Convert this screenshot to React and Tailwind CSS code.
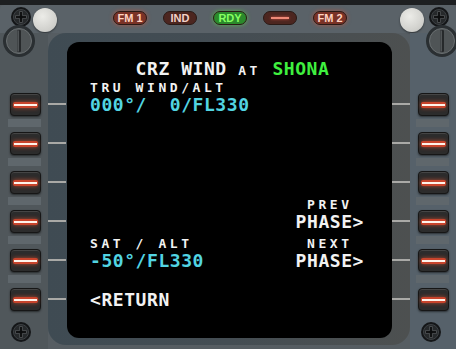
const L = "font-bold text-[18px] tracking-[0.56px]";
const S = "font-bold text-[13px] tracking-[3.57px]";
const W = "text-[#f2f2f2]";
const C = "text-[#52d4e2]";
const G = "text-[#3ff03f]";

function SmallScrew() {
  return (
    <svg width="20" height="20" viewBox="0 0 20 20">
      <circle cx="10" cy="10" r="10" fill="#141618" />
      <circle cx="10" cy="10" r="7.5" fill="#26292b" stroke="#3d4144" strokeWidth="1" />
      <path d="M8.6 4.5h2.8v4.1h4.1v2.8h-4.1v4.1H8.6v-4.1H4.5V8.6h4.1z" fill="#0c0d0e" stroke="#55595c" strokeWidth="0.8" />
    </svg>
  );
}

function BigScrew() {
  return (
    <svg width="32" height="32" viewBox="0 0 32 32">
      <circle cx="16" cy="16" r="16" fill="#2a2f32" />
      <circle cx="16" cy="16" r="12.5" fill="#4f5456" stroke="#6a6f71" strokeWidth="1" />
      <rect x="14" y="5" width="4" height="22" rx="1" fill="#26292b" />
      <rect x="14.6" y="5.5" width="1" height="21" fill="#6d7173" />
    </svg>
  );
}

function Knob() {
  return <div className="h-[24px] w-[24px] rounded-full bg-[radial-gradient(circle_at_40%_35%,#ecece8,#cfcfcb_70%,#a9a9a5)] shadow-[0_1px_2px_rgba(0,0,0,0.5)]" />;
}

function Pill({ children, tone = "red" }) {
  const styles = {
    red: "bg-[#7a3226] text-[#ffd3c2] shadow-[0_0_4px_rgba(230,80,50,0.55)]",
    dim: "bg-[#4c2620] text-[#f3d2c8]",
    green: "bg-[#2b8a2b] text-[#86ff62] shadow-[0_0_4px_rgba(80,230,60,0.6)]"
  };
  return (
    <div className={`flex h-[14px] w-[34px] items-center justify-center rounded-full border border-[#2a1a16] font-['Liberation_Sans',sans-serif] text-[11px] font-bold leading-none ${styles[tone]}`}>
      {children}
    </div>
  );
}

function Lsk({ plate = true }) {
  return (
    <div className="mb-[5px] flex flex-col">
      <div className="flex h-[23px] w-[31px] items-center justify-center rounded-[4px] border border-[#161616] bg-[#2c2c2c] shadow-[inset_0_1px_0_rgba(255,255,255,0.12),0_1px_2px_rgba(0,0,0,0.5)]">
        <div className="flex h-[6px] w-[25px] items-center justify-center rounded-[2px] bg-[#c8442c] shadow-[0_0_4px_rgba(255,90,50,0.6)]">
          <div className="h-[2px] w-[23px] bg-[#fff3ea]" />
        </div>
      </div>
      {plate ? <div className="-ml-[2px] mt-[3px] h-[8px] w-[33px] bg-[#5f676c]" /> : null}
    </div>
  );
}

function KeyColumn({ side }) {
  const left = side === "left";
  return (
    <div className={`flex flex-col ${left ? "w-[48px] bg-[#50575b] pl-[10px]" : "w-[46px] bg-[#56616a] pl-[8px]"}`}>
      <div className={`-mt-[8px] mb-[36px] ${left ? "-ml-[7px]" : "ml-[8px]"}`}>
        <BigScrew />
      </div>
      {[0, 1, 2, 3, 4].map((i) => (
        <Lsk key={i} />
      ))}
      <Lsk plate={false} />
      <div className={`mt-[6px] ${left ? "ml-[1px]" : "ml-[3px]"}`}>
        <SmallScrew />
      </div>
    </div>
  );
}

function Dashes() {
  return (
    <div className="flex flex-col pt-[61px]">
      {[0, 1, 2, 3, 4, 5].map((i) => (
        <div key={i} className="mb-[37px] h-[2px] w-[18px] bg-[#a9a9a6]" />
      ))}
    </div>
  );
}

function Pair({ l, r, dl, dr }) {
  return (
    <div className="mb-[4px]">
      <div className={`flex h-[15px] justify-between whitespace-pre leading-[15px] ${S}`}>
        <span>{l}</span>
        <span>{r}</span>
      </div>
      <div className={`flex h-[20px] justify-between whitespace-pre leading-[20px] ${L}`}>
        <span>{dl}</span>
        <span>{dr}</span>
      </div>
    </div>
  );
}

function Screen() {
  return (
    <div className="h-[296px] w-[325px] rounded-[12px] bg-black pt-[15px] font-['DejaVu_Sans_Mono',monospace]">
      <div className="ml-[23px] w-[274px]">
        <div className={`h-[23px] whitespace-pre leading-[23px] ${W}`}>
          <span className={L}>{"    CRZ WIND "}</span>
          <span className={S}>AT</span>
          <span className={L}>{" "}</span>
          <span className={`${L} ${G}`}>SHONA</span>
        </div>
        <Pair l={<span className={W}>TRU WIND/ALT</span>} dl={<span className={C}>000°/  0/FL330</span>} />
        <Pair l=" " dl=" " />
        <Pair l=" " dl=" " />
        <Pair r={<span className={W}>PREV </span>} dr={<span className={W}>PHASE&gt;</span>} />
        <Pair
          l={<span className={W}>SAT / ALT</span>}
          r={<span className={W}>NEXT </span>}
          dl={<span className={C}>-50°/FL330</span>}
          dr={<span className={W}>PHASE&gt;</span>}
        />
        <Pair l=" " dl={<span className={W}>&lt;RETURN</span>} />
      </div>
    </div>
  );
}

export default function App() {
  return (
    <div className="flex h-[349px] w-[456px] flex-col overflow-hidden bg-[#565d62]">
      <div className="h-[5px] bg-[#1d1f21]" />
      <div className="flex h-[28px] items-start rounded-t-[4px] bg-[#5a6268] pl-[11px]">
        <div className="mt-[2px]">
          <SmallScrew />
        </div>
        <div className="ml-[2px] mt-[3px]">
          <Knob />
        </div>
        <div className="ml-[56px] mt-[6px] flex gap-[16px]">
          <Pill>FM 1</Pill>
          <Pill tone="dim">IND</Pill>
          <Pill tone="green">RDY</Pill>
          <Pill tone="dim">
            <div className="h-[2px] w-[18px] bg-[#f08a78] shadow-[0_0_3px_rgba(255,100,80,0.8)]" />
          </Pill>
          <Pill>FM 2</Pill>
        </div>
        <div className="ml-[53px] mt-[3px]">
          <Knob />
        </div>
        <div className="ml-[5px] mt-[2px]">
          <SmallScrew />
        </div>
      </div>
      <div className="flex h-[316px]">
        <KeyColumn side="left" />
        <div className="flex h-[312px] w-[362px] flex-col rounded-[18px] bg-linear-to-r from-[#3f4b53] via-[#444d53] to-[#4d5050] pt-[9px]">
          <div className="flex">
            <div className="w-[19px]">
              <Dashes />
            </div>
            <Screen />
            <div className="w-[18px]">
              <Dashes />
            </div>
          </div>
        </div>
        <KeyColumn side="right" />
      </div>
    </div>
  );
}
